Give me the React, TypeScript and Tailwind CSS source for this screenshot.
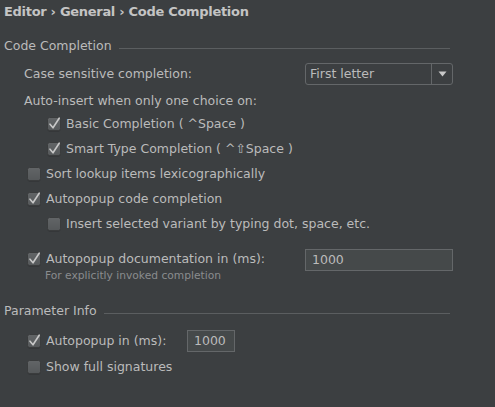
import React from "react";

function Check({ checked }: { checked: boolean }) {
  return (
    <svg width="16" height="16" viewBox="0 0 16 16" className="shrink-0">
      <defs>
        <linearGradient id="cbg" x1="0" y1="0" x2="0" y2="1">
          <stop offset="0" stopColor="#626567" />
          <stop offset="1" stopColor="#55585a" />
        </linearGradient>
      </defs>
      <rect x="1.5" y="2.5" width="13" height="13" rx="2" fill="#2f3132" />
      <rect x="1.5" y="1.5" width="13" height="13" rx="2" fill="url(#cbg)" stroke="#3a3c3d" strokeWidth="1" />
      {checked && (
        <path
          d="M4 8.2 L7 11.8 L13.2 2.2"
          fill="none"
          stroke="#c8c8c8"
          strokeWidth="1.6"
          strokeLinecap="round"
          strokeLinejoin="round"
        />
      )}
    </svg>
  );
}

function CbRow({
  checked,
  label,
  indent,
  className = "",
}: {
  checked: boolean;
  label: string;
  indent: number;
  className?: string;
}) {
  return (
    <div className={`flex h-[20px] items-center ${className}`} style={{ paddingLeft: indent }}>
      <Check checked={checked} />
      <span className="ml-[4px] whitespace-nowrap">{label}</span>
    </div>
  );
}

function SectionHeader({ title, className = "" }: { title: string; className?: string }) {
  return (
    <div className={`flex h-[18px] items-center pl-[4px] pr-[45px] ${className}`}>
      <span className="whitespace-nowrap">{title}</span>
      <div className="ml-[7px] mt-[4px] h-px flex-1 bg-[#5b5e60]" />
    </div>
  );
}

export default function App() {
  return (
    <div
      className="h-[407px] w-[495px] overflow-hidden bg-[#3c3f41] text-[12.5px] text-[#bbbbbb]"
      style={{ fontFamily: '"DejaVu Sans", sans-serif' }}
    >
      <div className="flex h-[24px] items-center pl-[4px] text-[13px] font-bold tracking-[-0.3px] text-[#c4c4c4]">
        Editor › General › Code Completion
      </div>

      <SectionHeader title="Code Completion" className="mt-[13px]" />

      <div className="mt-[8px] flex h-[22px] items-center pl-[24px]">
        <span className="w-[281px] whitespace-nowrap">Case sensitive completion:</span>
        <div className="flex h-[22px] w-[148px] items-stretch rounded-[3px] border border-[#646769]">
          <div className="flex flex-1 items-center pl-[4px]">First letter</div>
          <div className="flex w-[21px] items-center justify-center border-l border-[#646769]">
            <svg width="9" height="6" viewBox="0 0 9 6">
              <path d="M0.5 0.5 H8.5 L4.5 5.5 Z" fill="#c8c8c8" />
            </svg>
          </div>
        </div>
      </div>

      <div className="mt-[6px] flex h-[20px] items-center pl-[24px] whitespace-nowrap">
        Auto-insert when only one choice on:
      </div>

      <CbRow checked label="Basic Completion ( ^Space )" indent={46} className="mt-[3px]" />
      <CbRow checked label="Smart Type Completion ( ^⇧Space )" indent={46} className="mt-[5px]" />
      <CbRow checked={false} label="Sort lookup items lexicographically" indent={26} className="mt-[5px]" />
      <CbRow checked label="Autopopup code completion" indent={26} className="mt-[5px]" />
      <CbRow
        checked={false}
        label="Insert selected variant by typing dot, space, etc."
        indent={46}
        className="mt-[5px]"
      />

      <div className="mt-[15px] flex items-start">
        <div className="w-[305px]">
          <CbRow checked label="Autopopup documentation in (ms):" indent={26} />
          <div className="h-[13px] pl-[45px] text-[10.7px] leading-[13px] text-[#8a8c8e] whitespace-nowrap">
            For explicitly invoked completion
          </div>
        </div>
        <div className="flex h-[22px] w-[148px] items-center border border-[#646769] bg-[#45494a] pl-[6px]">
          1000
        </div>
      </div>

      <SectionHeader title="Parameter Info" className="mt-[20px]" />

      <div className="mt-[10px] flex h-[22px] items-center">
        <div className="w-[187px]">
          <CbRow checked label="Autopopup in (ms):" indent={26} />
        </div>
        <div className="flex h-[22px] w-[48px] items-center border border-[#646769] bg-[#45494a] pl-[6px]">
          1000
        </div>
      </div>

      <CbRow checked={false} label="Show full signatures" indent={26} className="mt-[5px]" />
    </div>
  );
}
